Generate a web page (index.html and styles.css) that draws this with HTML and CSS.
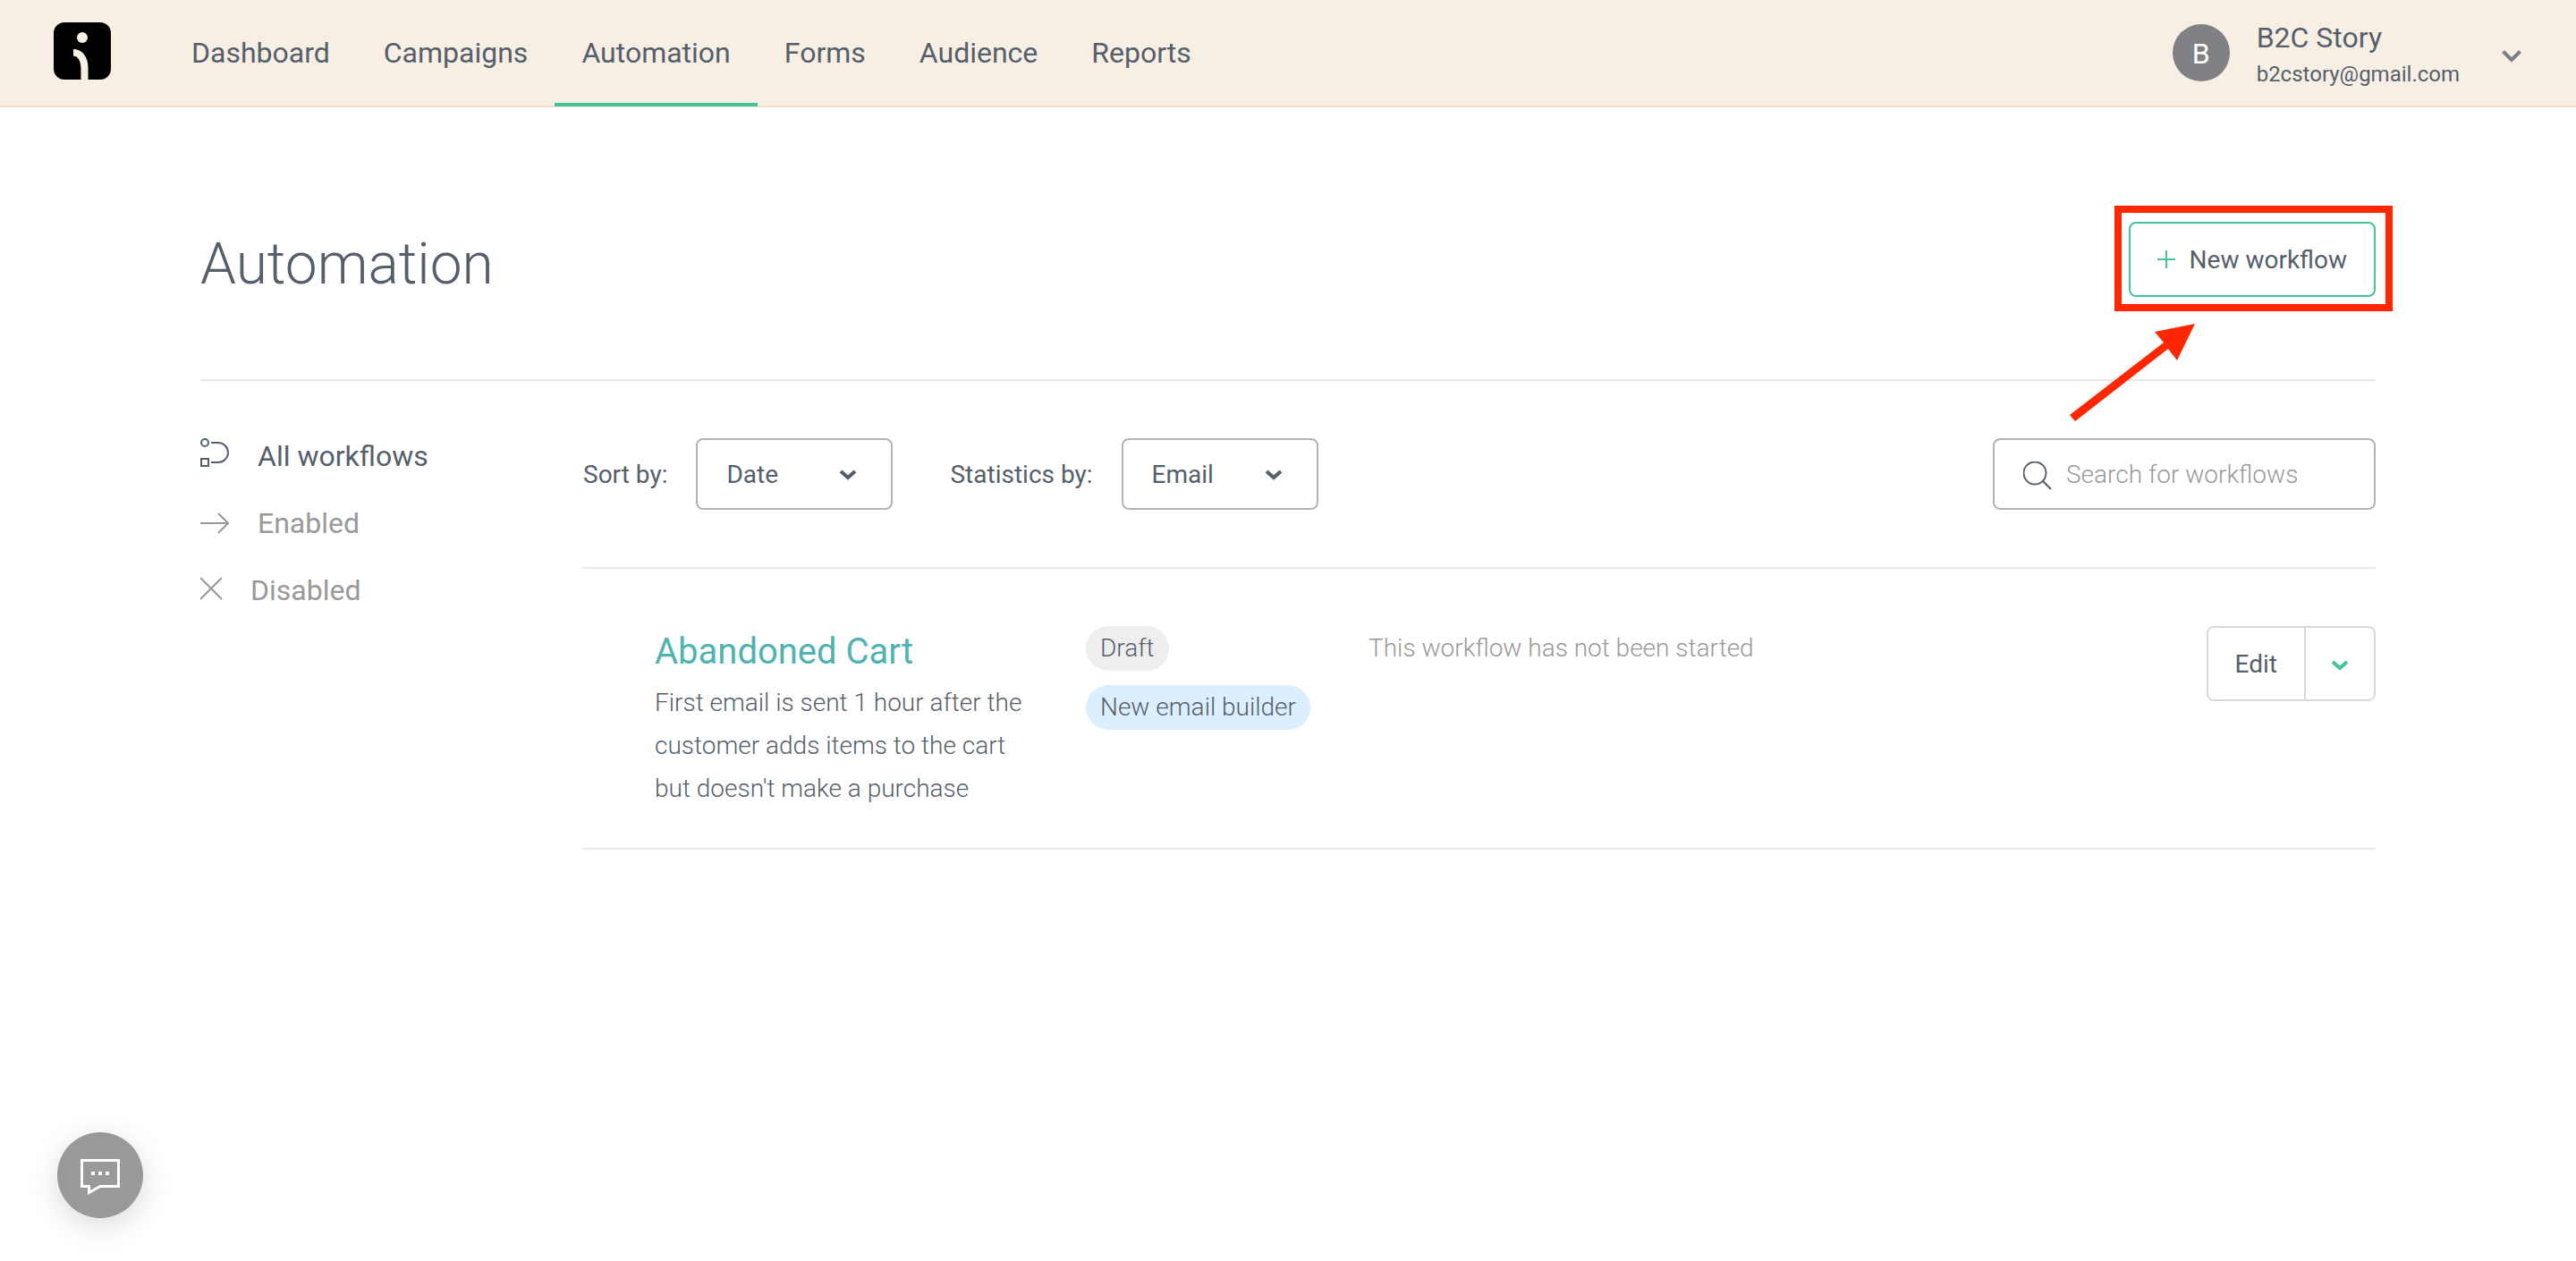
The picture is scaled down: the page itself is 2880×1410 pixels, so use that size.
FILE: index.html
```html
<!DOCTYPE html>
<html lang="en">
<head>
<meta charset="utf-8">
<meta name="viewport" content="width=device-width, initial-scale=1">
<title>Automation</title>
<link rel="stylesheet" href="styles.css">
</head>
<body>
<header class="topbar">
  <a class="logo" href="#" aria-label="Home">
    <svg viewBox="0 0 64 64" width="64" height="64" aria-hidden="true">
      <rect width="64" height="64" rx="12" fill="#000"/>
      <circle cx="32" cy="17" r="6" fill="#f8efe4"/>
      <path d="M22 30C32 30 38.500 38 38.500 51V64H30.500V53C30.500 44 28 38 22 37.500Z" fill="#f8efe4"/>
    </svg>
  </a>
  <nav class="nav" aria-label="Main">
    <a class="nav-link" href="#">Dashboard</a>
    <a class="nav-link" href="#">Campaigns</a>
    <a class="nav-link nav-link-active" href="#" aria-current="page">Automation</a>
    <a class="nav-link" href="#">Forms</a>
    <a class="nav-link" href="#">Audience</a>
    <a class="nav-link" href="#">Reports</a>
  </nav>
  <button class="account" type="button">
    <span class="avatar">B</span>
    <span class="account-text">
      <span class="account-name">B2C Story</span>
      <span class="account-email">b2cstory@gmail.com</span>
    </span>
    <svg class="account-chevron" viewBox="0 0 24 24" width="24" height="24" aria-hidden="true"><path d="M2.500 6.500L12 16L21.500 6.500" fill="none" stroke="#808185" stroke-width="4"/></svg>
  </button>
</header>

<main class="page">
  <div class="page-head">
    <h1 class="page-title">Automation</h1>
    <div class="callout">
      <button class="new-button" type="button">
        <svg viewBox="0 0 20 20" width="20" height="20" aria-hidden="true"><path d="M10 0V20M0 10H20" stroke="#41c497" stroke-width="2"/></svg>
        New workflow
      </button>
      <svg class="callout-arrow" viewBox="0 0 144 110" width="144" height="110" aria-hidden="true"><path d="M3 102L108 21L98 9L143 0L123 41L113 28L9 109Z" fill="#ff2600"/></svg>
    </div>
  </div>

  <div class="columns">
    <nav class="filters" aria-label="Workflow filters">
      <a class="filter filter-active" href="#">
        <svg viewBox="0 0 32 40" width="32" height="40" fill="none" stroke="currentColor" stroke-width="2" aria-hidden="true"><circle cx="5" cy="5" r="4"/><rect x="1" y="23" width="8" height="8"/><path d="M12 5H20A11 11 0 0 1 20 27H12"/></svg>
        All workflows
      </a>
      <a class="filter" href="#">
        <svg viewBox="0 0 32 40" width="32" height="40" fill="none" stroke="currentColor" stroke-width="2" aria-hidden="true"><path d="M0 20H31M20 9L31 20L20 31"/></svg>
        Enabled
      </a>
      <a class="filter" href="#">
        <svg viewBox="0 0 24 40" width="24" height="40" fill="none" stroke="currentColor" stroke-width="2" aria-hidden="true"><path d="M0 6L24 30M24 6L0 30"/></svg>
        Disabled
      </a>
    </nav>

    <section class="workflows">
      <div class="toolbar">
        <label for="sort">Sort by:</label>
        <div class="select-box">
          <select id="sort"><option>Date</option><option>Name</option></select>
          <svg viewBox="0 0 20 12" width="20" height="12" aria-hidden="true"><path d="M2 2L10 9L18 2" fill="none" stroke="#555f6b" stroke-width="4"/></svg>
        </div>
        <label class="label-stats" for="stats">Statistics by:</label>
        <div class="select-box">
          <select id="stats"><option>Email</option><option>SMS</option></select>
          <svg viewBox="0 0 20 12" width="20" height="12" aria-hidden="true"><path d="M2 2L10 9L18 2" fill="none" stroke="#555f6b" stroke-width="4"/></svg>
        </div>
        <div class="search">
          <svg viewBox="0 0 32 32" width="32" height="32" fill="none" stroke="#555f6b" stroke-width="2" aria-hidden="true"><circle cx="13" cy="13" r="12.500"/><path d="M21.500 21.500L31 31"/></svg>
          <input type="search" placeholder="Search for workflows" aria-label="Search for workflows">
        </div>
      </div>

      <article class="workflow">
        <div>
          <h2 class="workflow-title"><a href="#">Abandoned Cart</a></h2>
          <p class="workflow-text">First email is sent 1 hour after the customer adds items to the cart but doesn't make a purchase</p>
        </div>
        <div class="tags">
          <span class="tag">Draft</span>
          <span class="tag tag-blue">New email builder</span>
        </div>
        <p class="workflow-status">This workflow has not been started</p>
        <div class="actions">
          <button class="action" type="button">Edit</button>
          <button class="action action-more" type="button" aria-label="More actions">
            <svg viewBox="0 0 20 12" width="20" height="12" aria-hidden="true"><path d="M2 2L10 9L18 2" fill="none" stroke="#41c497" stroke-width="4"/></svg>
          </button>
        </div>
      </article>
    </section>
  </div>
</main>

<button class="chat" type="button" aria-label="Open chat">
  <svg viewBox="0 0 44 40" width="44" height="40" aria-hidden="true"><path d="M1.500 1.500H42.500V30.500H22L9.500 37.500V30.500H1.500Z" fill="none" stroke="#fff" stroke-width="3"/><path d="M12 14h4v4h-4zM20 14h4v4h-4zM28 14h4v4h-4z" fill="#fff"/></svg>
</button>
</body>
</html>
```
FILE: styles.css
```css
* {
  box-sizing: border-box;
}

body {
  margin: 0;
  background: #fff;
  color: #555f6b;
  font-family: Roboto, sans-serif;
  font-size: 28px;
}

h1,
h2,
p {
  margin: 0;
}

a {
  color: inherit;
  text-decoration: none;
}

button,
input,
select {
  font: inherit;
  color: inherit;
  cursor: pointer;
}

svg {
  flex: none;
}

/* Top bar */
.topbar {
  display: flex;
  height: 120px;
  padding: 0 60px;
  background: #f8efe4;
  border-bottom: 2px solid #f0dccb;
}

.logo {
  display: flex;
  align-items: flex-start;
  padding-top: 25px;
  margin-right: 60px;
}

.nav {
  display: flex;
  font-size: 32px;
  margin-bottom: -1px;
}

.nav-link {
  display: flex;
  align-items: center;
  padding: 2px 30px 0;
  border-bottom: 4px solid transparent;
}

.nav-link-active {
  border-color: #41c497;
}

.account {
  display: flex;
  align-items: center;
  margin-left: auto;
  padding: 0;
  border: 0;
  background: none;
  text-align: left;
}

.avatar {
  width: 64px;
  height: 64px;
  margin-right: 30px;
  border-radius: 50%;
  background: #808185;
  color: #fff;
  font-size: 32px;
  line-height: 66px;
  text-align: center;
}

.account-name,
.account-email {
  display: block;
}

.account-name {
  font-size: 32px;
  line-height: 48px;
}

.account-email {
  font-size: 24px;
  line-height: 34px;
}

.account-chevron {
  margin: 8px 0 0 46px;
}

/* Page */
.page {
  max-width: 2432px;
  margin: 0 auto;
  padding-top: 128px;
}

.page-head {
  display: flex;
  align-items: flex-start;
  justify-content: space-between;
  padding-bottom: 80px;
  border-bottom: 2px solid #e8e8e8;
}

.page-title {
  font-size: 64px;
  font-weight: 300;
  line-height: 96px;
}

.callout {
  position: relative;
}

/* Highlight frame drawn around the button */
.callout::after {
  content: "";
  position: absolute;
  inset: -18px -19px -16px -16px;
  border: 8px solid #ff2600;
  pointer-events: none;
}

.callout-arrow {
  position: absolute;
  top: 114px;
  left: -69px;
}

.new-button {
  display: flex;
  align-items: center;
  gap: 16px;
  height: 84px;
  padding: 0 30px;
  border: 2px solid #41c497;
  border-radius: 8px;
  background: #fff;
}

.columns {
  display: flex;
  padding-top: 64px;
}

/* Filters */
.filters {
  display: flex;
  flex-direction: column;
  gap: 35px;
  width: 428px;
  flex: none;
}

.filter {
  display: flex;
  align-items: center;
  gap: 32px;
  color: #999;
  font-size: 32px;
  line-height: 40px;
}

.filter-active {
  color: #555f6b;
}

/* Toolbar */
.workflows {
  flex: 1;
}

.toolbar {
  display: flex;
  align-items: center;
  padding-bottom: 64px;
  border-bottom: 2px solid #e8e8e8;
}

.select-box {
  position: relative;
  margin-left: 32px;
}

.select-box select {
  appearance: none;
  width: 220px;
  height: 80px;
  padding: 0 60px 0 32px;
  border: 2px solid #b3b3b3;
  border-radius: 8px;
  background: #fff;
}

.select-box svg {
  position: absolute;
  top: 35px;
  right: 40px;
  pointer-events: none;
}

.label-stats {
  margin-left: 64px;
}

.search {
  display: flex;
  align-items: center;
  gap: 16px;
  width: 428px;
  height: 80px;
  margin-left: auto;
  padding: 0 32px;
  border: 2px solid #b3b3b3;
  border-radius: 8px;
}

.search svg {
  margin-top: 4px;
}

.search input {
  flex: 1;
  min-width: 0;
  padding: 0;
  border: 0;
  background: none;
  font-weight: 300;
}

.search input::placeholder {
  color: #999;
}

/* Workflow row */
.workflow {
  display: grid;
  grid-template-columns: 418px 252px 1fr auto;
  align-items: start;
  column-gap: 64px;
  padding: 64px 0 42px 80px;
  border-bottom: 2px solid #e8e8e8;
  font-weight: 300;
}

.workflow-title {
  color: #4fb3b0;
  font-size: 40px;
  font-weight: 400;
  line-height: 58px;
}

.workflow-text {
  margin-top: 4px;
  line-height: 48px;
}

.tags {
  display: flex;
  flex-direction: column;
  align-items: flex-start;
  gap: 16px;
}

.tag {
  padding: 0 16px;
  border-radius: 25px;
  background: #eee;
  line-height: 50px;
  white-space: nowrap;
}

.tag-blue {
  background: #dbefff;
}

.workflow-status {
  color: #999;
  line-height: 50px;
}

.actions {
  display: flex;
  height: 84px;
  border: 2px solid #d9d9d9;
  border-radius: 8px;
}

.action {
  padding: 0 30px;
  border: 0;
  background: none;
  font-weight: 400;
}

.action-more {
  padding: 4px 28px 0;
  border-left: 2px solid #d9d9d9;
}

.action-more svg {
  display: block;
}

/* Chat launcher */
.chat {
  position: fixed;
  bottom: 48px;
  left: 64px;
  display: grid;
  place-items: center;
  width: 96px;
  height: 96px;
  padding: 4px 0 0;
  border: 0;
  border-radius: 50%;
  background: #999;
  box-shadow: 0 8px 32px rgba(60, 70, 85, 0.2);
}
```
